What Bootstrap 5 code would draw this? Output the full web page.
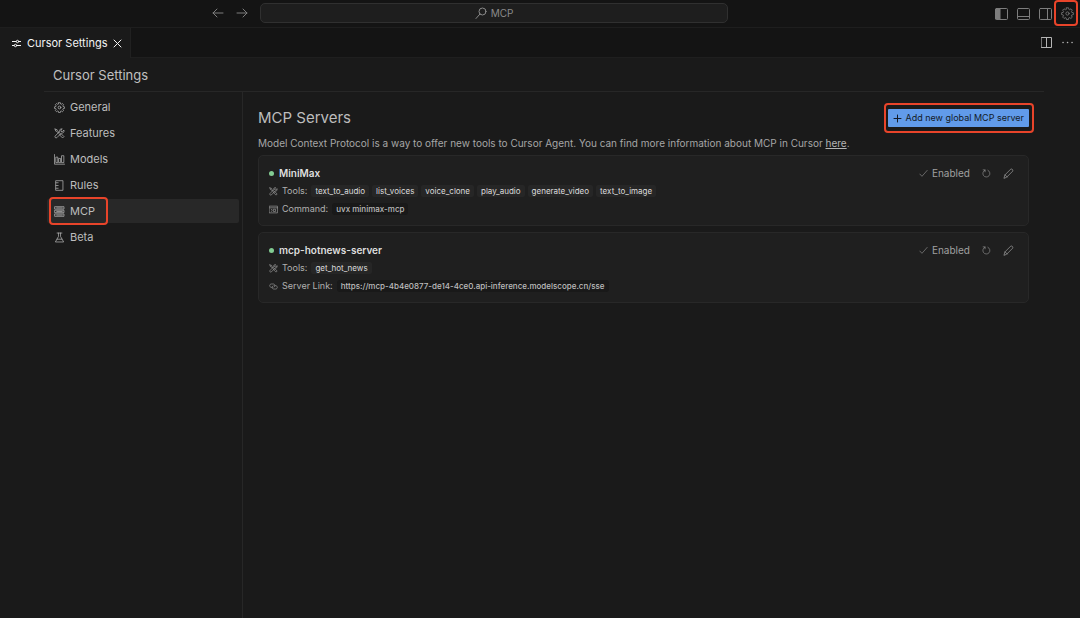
<!DOCTYPE html>
<html lang="en" data-bs-theme="dark">
<head>
<meta charset="utf-8">
<meta name="viewport" content="width=device-width, initial-scale=1">
<title>Cursor Settings</title>
<link href="https://cdn.jsdelivr.net/npm/bootstrap@5.3.0/dist/css/bootstrap.min.css" rel="stylesheet">
<style>
  body { background: #1a1a1a; color: #c0c0c0; font-family: Inter, "Liberation Sans", sans-serif; font-size: 11px; line-height: 16px; }
  button { font: inherit; color: inherit; background: none; border: 0; padding: 0; }
  svg { display: block; flex: none; fill: none; stroke: currentColor; stroke-linecap: round; stroke-linejoin: round; }
  .i9 { width: 9px; height: 9px; }
  .i11 { width: 11px; height: 11px; }
  .i13 { width: 13px; height: 13px; }

  .titlebar { display: grid; grid-template-columns: 260fr 468fr 352fr; height: 28px; padding-bottom: 1px; background: #141414; border-bottom: 1px solid #1e1e1e; color: #7d7d7d; }
  .command-box { height: 20px; background: #1e1e1e; border: 1px solid #303030; border-radius: 5px; font-size: 10px; color: #8a8a8a; }
  .title-actions { gap: 9px; padding-right: 6px; }
  .tabstrip { height: 30px; background: #141414; border-bottom: 1px solid #1f1f1f; }
  .editor-tab { background: #1a1a1a; color: #f4f4f4; border-right: 1px solid #212121; margin-bottom: -1px; padding: 0 8px 0 12px; gap: 6px; }
  .tab-actions { gap: 10px; padding-right: 7px; color: #b5b5b5; }

  .settings { padding: 0 36px 0 44px; }
  .settings-title { height: 34px; padding: 9px 9px 0; font-size: 13px; line-height: 16px; border-bottom: 1px solid #272727; }
  .sidebar { width: 199px; row-gap: 2px; border-right: 1px solid #272727; padding: 3px 3px 0; }
  .side-item { display: flex; align-items: center; gap: 5px; height: 24px; padding: 0 7px; color: #bdbdbd; text-decoration: none; border-radius: 2px; }
  .side-item.active { background: #282828; }

  .panel { padding: 16px 15px 0; }
  .panel-title { font-size: 15px; line-height: 20px; font-weight: 400; color: #bdbdbd; }
  .intro { margin: 8px 0 5px; font-size: 10px; line-height: 14px; color: #a6a6a6; }
  .intro a { color: #b4b4b4; }
  .add-btn { display: flex; align-items: center; gap: 3px; height: 18px; padding: 0 5px; background: #619bea; color: #131a26; font-size: 9px; border-radius: 1px; }
  .server-list { row-gap: 6px; }
  .server { background: #1f1f1f; border: 1px solid #282828; border-radius: 5px; padding: 8px 10px 7px; }
  .server-name { gap: 5px; font-size: 10px; line-height: 18px; font-weight: 600; color: #dedede; }
  .dot { width: 5px; height: 5px; border-radius: 50%; background: #82cc92; }
  .meta-row { height: 18px; font-size: 9px; color: #b0b0b0; }
  .chips { gap: 3px; }
  .chip { background: #262626; border-radius: 2px; padding: 0 4px; line-height: 12px; font-size: 8px; color: #dcdcdc; }
  .code { background: #191919; border-radius: 3px; padding: 0 4px; line-height: 12px; font-size: 8px; font-weight: 500; color: #bdbdbd; }
  .callout { position: absolute; border: 2px solid #e8442a; border-radius: 4px; pointer-events: none; }
  .callout-gear { inset: -7px -4px -6px -7px; }
  .callout-nav { inset: -2px auto -2px 2px; width: 59px; }
  .callout-add { inset: -6px -5px -6px -4px; }
  .server-actions { color: #a0a0a0; font-size: 10px; line-height: 18px; }
</style>
</head>
<body class="d-flex flex-column min-vh-100">
<svg width="0" height="0" class="position-absolute" aria-hidden="true">
  <defs>
    <symbol id="gear" viewBox="0 0 16 16"><path d="M6.700 1h2.600l.4 2 .9.400 1.700-1.200 1.600 1.700-1.100 1.700.4 1 2 .4v2.400l-2 .4-.4 1 1.100 1.700-1.700 1.600-1.700-1.100-.9.400-.4 2H6.700l-.4-2-.9-.4-1.700 1.100-1.700-1.700 1.200-1.700-.4-.9-2-.4V7l2-.4.400-1L2 3.900l1.700-1.700 1.700 1.200.9-.4z"/><circle cx="8" cy="8" r="2"/></symbol>
    <symbol id="tools" viewBox="0 0 16 16"><path d="M1.500 1.500l3 1 .5 1.500 3 3M1.500 1.500l1 3L4 5l3 3M9 9l1.500-.5 4 4-2 2-4-4zM14 3.500l-2 1.800-1.700-.3-.3-1.800L12 1.400C9.500.500 7.700 2.500 8.300 4.800L1.600 11.800c-1 1.600.9 3.300 2.500 2.300l6.800-6.800c2.500.5 4.300-1.500 3.600-3.800z"/></symbol>
    <symbol id="chart" viewBox="0 0 16 16"><path d="M.7.800v14h14.600M3.200 4.500h2.300v8H3.200zM7.300 6.500h2.300v6H7.300zM11.500 2.500h2.800v10h-2.800z"/></symbol>
    <symbol id="rules" viewBox="0 0 16 16"><path d="M3 1h10v14H3zM3 4h3M3 8h3M3 12h3"/></symbol>
    <symbol id="server" viewBox="0 0 16 16"><path d="M1.500 1h13v3.500h-13zM1.500 6.200h13v3.500h-13zM1.500 11.500h13V15h-13zM4 2.800h8M4 8h8M4 13.200h8"/></symbol>
    <symbol id="flask" viewBox="0 0 16 16"><path d="M4.500 1.500h7M6.500 1.500v5L2 14.500h12l-4.500-8v-5M4.500 10.500h7"/></symbol>
    <symbol id="check" viewBox="0 0 16 16"><path d="M1.500 9l3.800 4L14.500 2.500"/></symbol>
    <symbol id="refresh" viewBox="0 0 16 16"><path d="M2 1.500h3.500V5M5.500 2A6.300 6.300 0 1 0 10.500 2.200"/></symbol>
    <symbol id="pencil" viewBox="0 0 16 16"><path d="M1.500 14.500l1.200-4.300 8.500-8.500c1.600-1 3.800 1 2.900 2.900l-8.600 8.600zM3 10l3.200 3.200"/></symbol>
    <symbol id="terminal" viewBox="0 0 16 16"><path d="M1 2h14v12H1zM1 5h14M4 7.500l2 2-2 2M8.500 7.500h3v4h-3z"/></symbol>
    <symbol id="chain" viewBox="0 0 16 16"><path d="M5.500 9.500H4.300C.3 9.500.3 3.500 4.300 3.500h3.200c3.300 0 4 4.500 1.200 5.700M10.500 6.500h1.200c4 0 4 6 0 6H8.500c-3.300 0-4-4.500-1.200-5.700"/></symbol>
  </defs>
</svg>

<header class="titlebar">
  <div class="d-flex align-items-center justify-content-end gap-2 pe-1">
    <button aria-label="Back" class="px-1"><svg width="12" height="12" viewBox="0 0 12 12"><path d="M11 6H1M5 2L1 6l4 4"/></svg></button>
    <button aria-label="Forward" class="pe-2"><svg width="12" height="12" viewBox="0 0 12 12"><path d="M1 6h10M7 2l4 4-4 4"/></svg></button>
  </div>
  <button class="command-box d-flex align-items-center justify-content-center gap-1 align-self-center">
    <svg width="12" height="12" viewBox="0 0 12 12"><circle cx="7.500" cy="4.500" r="3.500"/><path d="M5 7l-4 4.500"/></svg>MCP
  </button>
  <div class="title-actions d-flex align-items-center justify-content-end">
    <button aria-label="Toggle side bar"><svg class="i13" viewBox="0 0 13 13"><rect x=".5" y="1.500" width="12" height="11" rx="1"/><path fill="currentColor" d="M1 2h4v10H1z"/></svg></button>
    <button aria-label="Toggle panel"><svg class="i13" viewBox="0 0 13 13"><rect x=".5" y="1.500" width="12" height="11" rx="1"/><path d="M1 9.500h11"/></svg></button>
    <button aria-label="Toggle secondary side bar"><svg class="i13" viewBox="0 0 13 13"><rect x=".5" y="1.500" width="12" height="11" rx="1"/><path d="M8.500 2v10"/></svg></button>
    <button aria-label="Settings" class="position-relative"><svg class="i13"><use href="#gear"/></svg><span class="callout callout-gear"></span></button>
  </div>
</header>

<div class="tabstrip d-flex justify-content-between">
  <div class="editor-tab d-flex align-items-center">
    <svg class="i9" viewBox="0 0 9 9"><path d="M0 2.500h4M7 2.500h2M0 6.500h2M5 6.500h4"/><circle cx="5.500" cy="2.500" r="1.200"/><circle cx="3.500" cy="6.500" r="1.200"/></svg>
    <span>Cursor Settings</span>
    <button aria-label="Close tab"><svg class="i9" viewBox="0 0 9 9"><path d="M1 1l7 7M8 1L1 8"/></svg></button>
  </div>
  <div class="tab-actions d-flex align-items-center">
    <button aria-label="Split editor"><svg width="11" height="11" viewBox="0 0 11 11"><path d="M.5.500h10v10H.5zM5.500.500v10"/></svg></button>
    <button aria-label="More actions"><svg width="11" height="3" viewBox="0 0 11 3"><path stroke-width="1.500" d="M1 1.500h.1M5.500 1.500h.1M10 1.500h.1"/></svg></button>
  </div>
</div>

<main class="settings d-flex flex-column flex-grow-1">
  <div class="settings-title">Cursor Settings</div>
  <div class="d-flex flex-grow-1">
    <nav class="sidebar d-flex flex-column flex-shrink-0">
      <a class="side-item" href="#"><svg class="i11"><use href="#gear"/></svg>General</a>
      <a class="side-item" href="#"><svg class="i11"><use href="#tools"/></svg>Features</a>
      <a class="side-item" href="#"><svg class="i11"><use href="#chart"/></svg>Models</a>
      <a class="side-item" href="#"><svg class="i11"><use href="#rules"/></svg>Rules</a>
      <a class="side-item active position-relative" href="#" aria-current="page"><svg class="i11"><use href="#server"/></svg>MCP<span class="callout callout-nav"></span></a>
      <a class="side-item" href="#"><svg class="i11"><use href="#flask"/></svg>Beta</a>
    </nav>
    <section class="panel flex-grow-1">
      <div class="d-flex justify-content-between align-items-center">
        <h1 class="panel-title m-0">MCP Servers</h1>
        <button class="add-btn position-relative"><svg class="i9" viewBox="0 0 9 9"><path d="M4.500 1v7M1 4.500h7"/></svg>Add new global MCP server<span class="callout callout-add"></span></button>
      </div>
      <p class="intro">Model Context Protocol is a way to offer new tools to Cursor Agent. You can find more information about MCP in Cursor <a href="#">here</a>.</p>

      <div class="server-list d-flex flex-column">
        <article class="server">
          <div class="d-flex justify-content-between">
            <h2 class="server-name d-flex align-items-center m-0"><span class="dot"></span>MiniMax</h2>
            <div class="server-actions d-flex align-items-center">
              <button class="d-flex align-items-center gap-1"><svg class="i9"><use href="#check"/></svg>Enabled</button>
              <button aria-label="Refresh" class="ms-2 ps-1"><svg class="i9"><use href="#refresh"/></svg></button>
              <button aria-label="Edit" class="ms-2 px-1"><svg class="i11"><use href="#pencil"/></svg></button>
            </div>
          </div>
          <div class="meta-row d-flex align-items-center gap-1"><svg class="i9"><use href="#tools"/></svg><span>Tools:</span>
            <div class="chips d-flex">
              <span class="chip">text_to_audio</span><span class="chip">list_voices</span><span class="chip">voice_clone</span><span class="chip">play_audio</span><span class="chip">generate_video</span><span class="chip">text_to_image</span>
            </div>
          </div>
          <div class="meta-row d-flex align-items-center gap-1"><svg class="i9"><use href="#terminal"/></svg><span>Command:</span><span class="code">uvx minimax-mcp</span></div>
        </article>
        <article class="server">
          <div class="d-flex justify-content-between">
            <h2 class="server-name d-flex align-items-center m-0"><span class="dot"></span>mcp-hotnews-server</h2>
            <div class="server-actions d-flex align-items-center">
              <button class="d-flex align-items-center gap-1"><svg class="i9"><use href="#check"/></svg>Enabled</button>
              <button aria-label="Refresh" class="ms-2 ps-1"><svg class="i9"><use href="#refresh"/></svg></button>
              <button aria-label="Edit" class="ms-2 px-1"><svg class="i11"><use href="#pencil"/></svg></button>
            </div>
          </div>
          <div class="meta-row d-flex align-items-center gap-1"><svg class="i9"><use href="#tools"/></svg><span>Tools:</span>
            <div class="chips d-flex"><span class="chip">get_hot_news</span></div>
          </div>
          <div class="meta-row d-flex align-items-center gap-1"><svg class="i9"><use href="#chain"/></svg><span>Server Link:</span><span class="code">https://mcp-4b4e0877-de14-4ce0.api-inference.modelscope.cn/sse</span></div>
        </article>
      </div>
    </section>
  </div>
</main>
<script src="https://cdn.jsdelivr.net/npm/bootstrap@5.3.0/dist/js/bootstrap.bundle.min.js"></script>
</body>
</html>
